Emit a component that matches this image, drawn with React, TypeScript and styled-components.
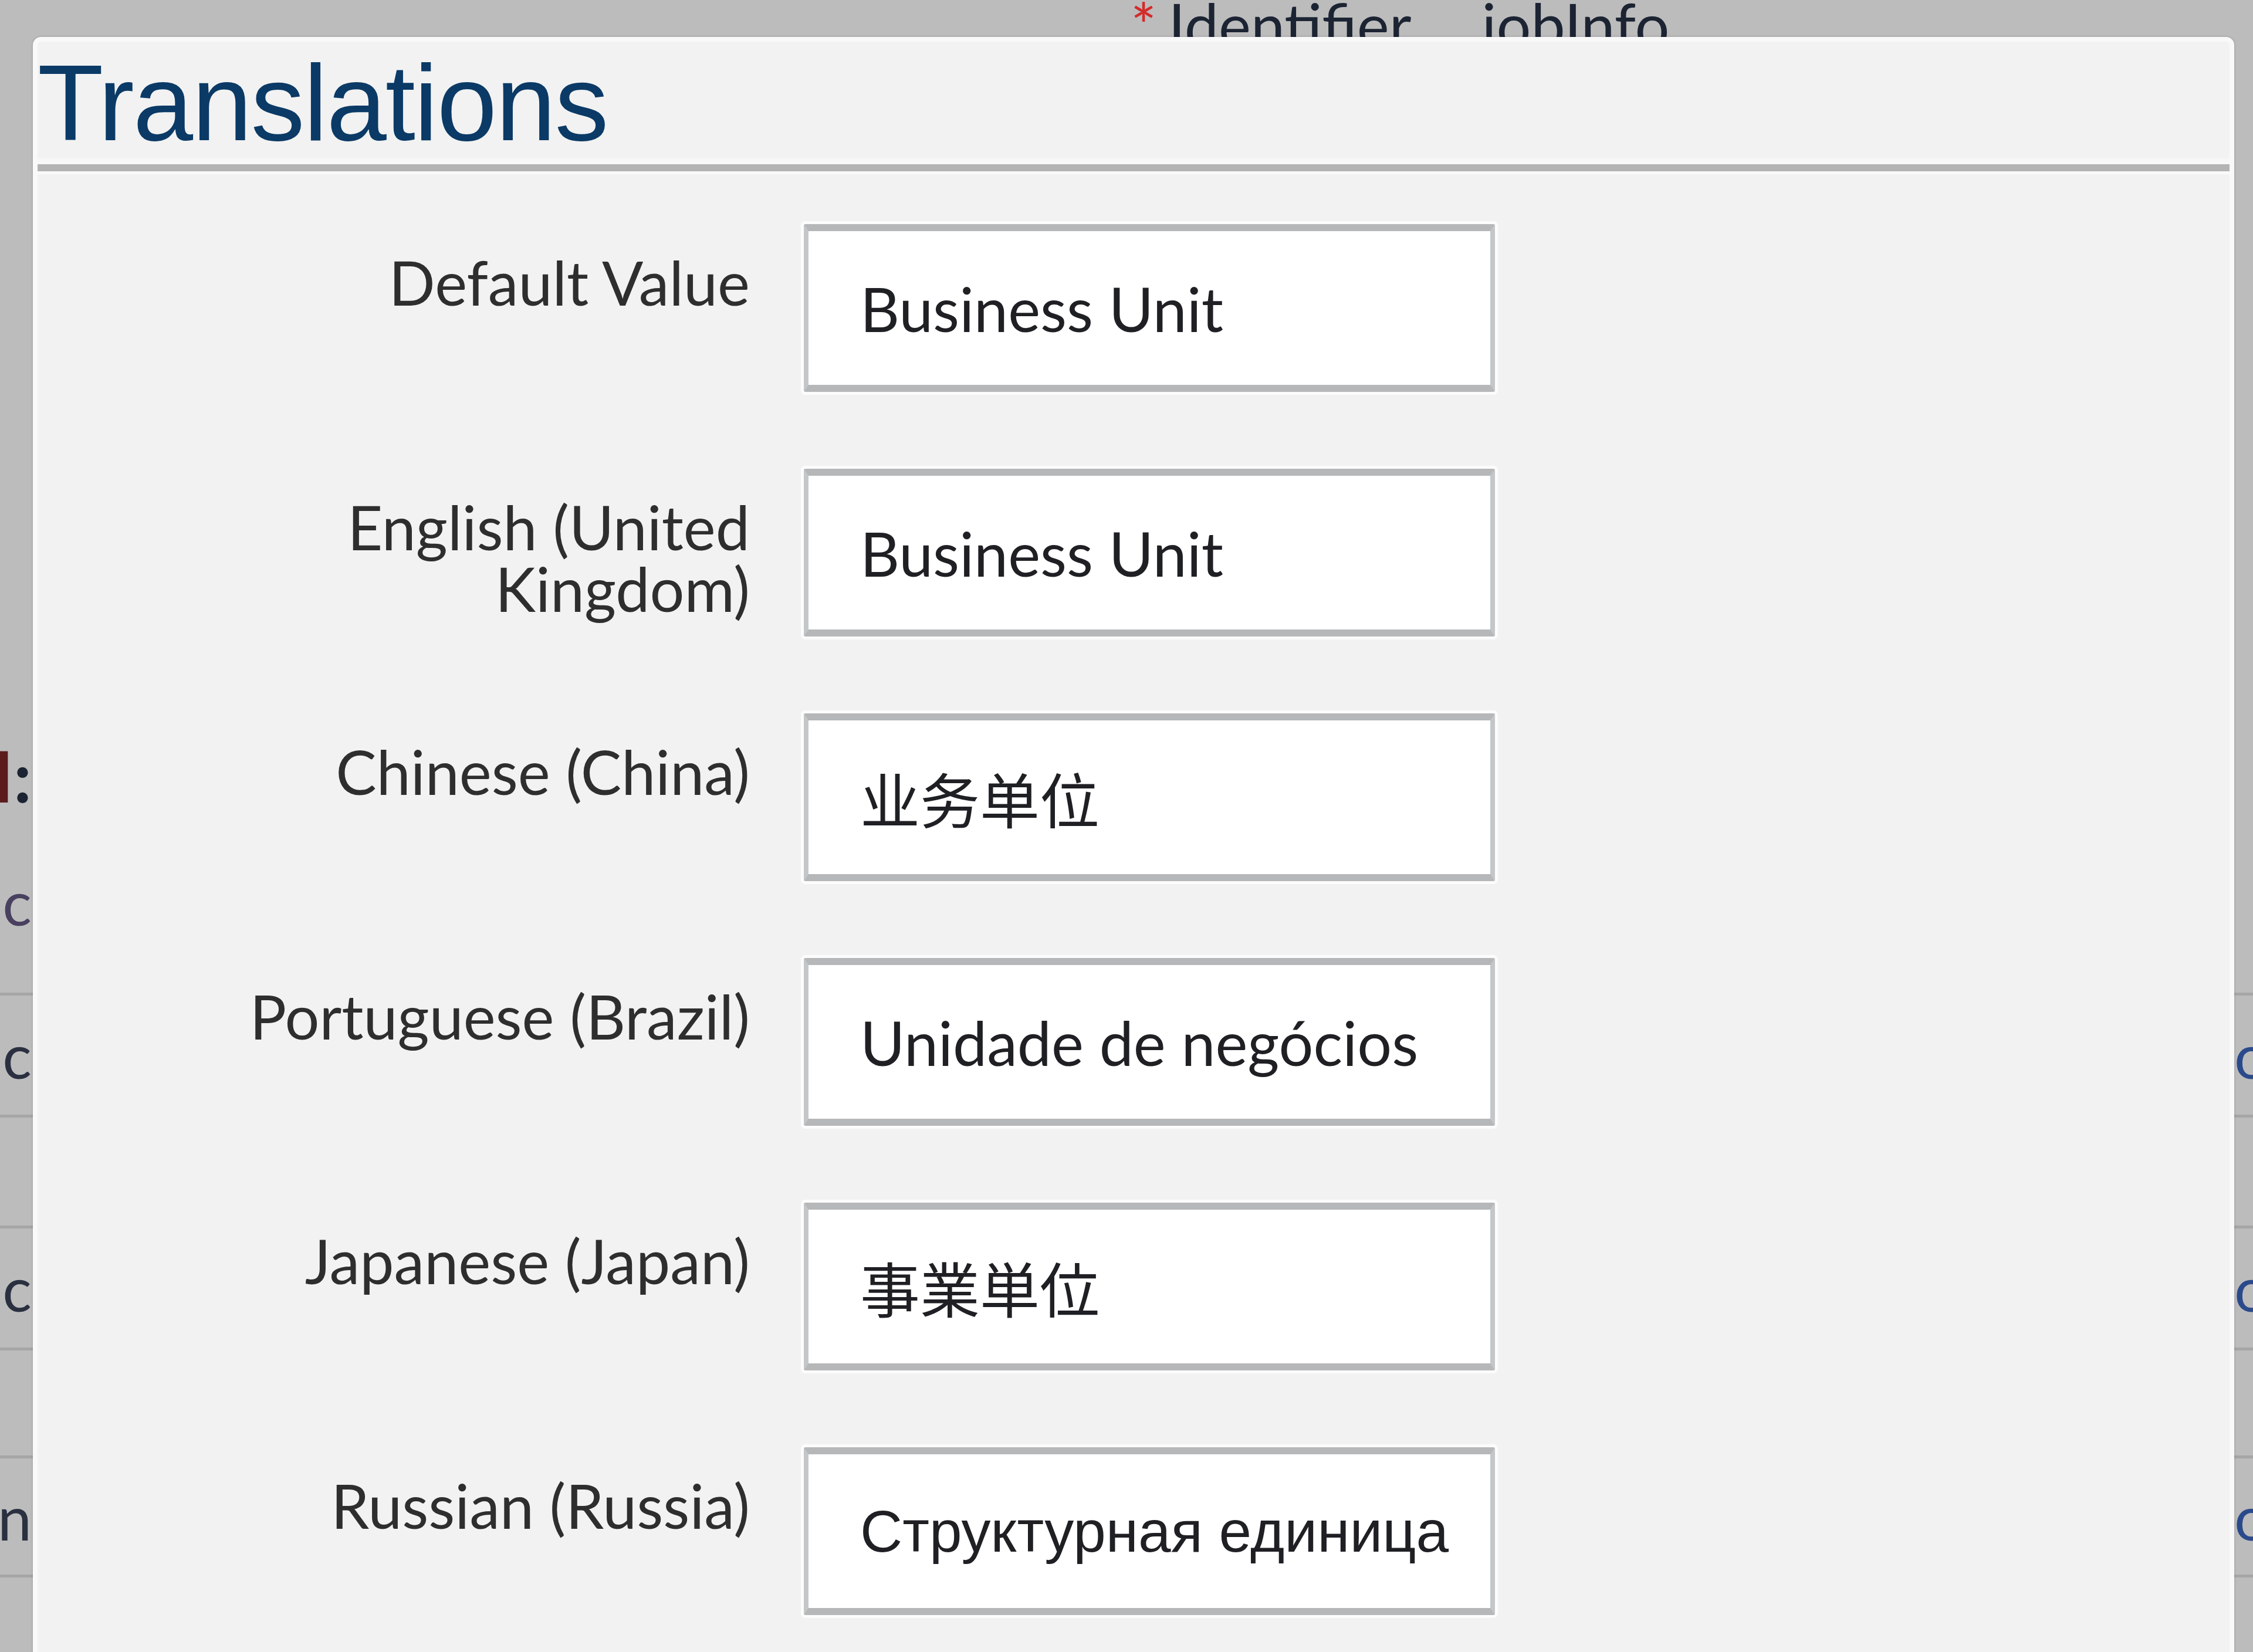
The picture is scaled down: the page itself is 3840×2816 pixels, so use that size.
import React from "react";
import styled, { createGlobalStyle } from "styled-components";

const Global = createGlobalStyle`
  html, body { margin: 0; padding: 0; }
  body { width: 3840px; height: 2816px; overflow: hidden; background: #bcbcbc; }
`;

const SANS = `"Lato", "Liberation Sans", "Noto Sans CJK SC", sans-serif`;

const Page = styled.div`
  position: relative;
  width: 3840px;
  height: 2816px;
  overflow: hidden;
  background: #bcbcbc;
  font-family: ${SANS};
`;

/* ---------- background page (dimmed behind the dialog) ---------- */
const BgColumn = styled.div`
  display: flex;
  flex-direction: column;
`;

const TopField = styled.div`
  height: 1262px;
  display: flex;
  align-items: flex-start;
  gap: 120px;
  padding-left: 1927px;
  font-size: 104px;
  line-height: 84px;
  color: #1c2433;
`;

const Req = styled.span`
  color: #d42a2a;
  margin-right: 20px;
`;

const BgRow = styled.div<{ $h: number; $line?: boolean }>`
  height: ${(p) => p.$h}px;
  display: grid;
  grid-template-columns: 54px 1fr 32px;
  align-items: center;
  border-bottom: ${(p) => (p.$line ? "5px solid #a6a6a6" : "none")};
  box-sizing: border-box;
`;

const BgLeft = styled.div<{ $bold?: boolean; $color?: string; $size?: number }>`
  display: flex;
  justify-content: flex-end;
  overflow: hidden;
  white-space: nowrap;
  font-size: ${(p) => p.$size ?? 104}px;
  font-weight: ${(p) => (p.$bold ? 700 : 400)};
  color: ${(p) => p.$color ?? "#2a3040"};
`;

const Colon = styled.span`
  color: #1c2433;
`;

const BgRight = styled.div`
  grid-column: 3;
  overflow: hidden;
  white-space: nowrap;
  font-size: 104px;
  color: #2b4a8c;
`;

/* ---------- dialog ---------- */
const Dialog = styled.div`
  position: absolute;
  left: 56px;
  top: 63px;
  right: 32px;
  bottom: -120px;
  background: #f2f2f2;
  border: 8px solid #f9f9f9;
  border-radius: 14px 14px 0 0;
  box-shadow: 0 0 4px rgba(0, 0, 0, 0.18);
  display: flex;
  flex-direction: column;
`;

const Header = styled.div`
  height: 209px;
  border-bottom: 12px solid #b3b3b3;
  box-shadow: 0 5px 0 #fafafa, inset 0 -10px 0 #f7f7f7;
`;

const Title = styled.h1`
  margin: 0;
  font-family: "Liberation Sans", Arial, sans-serif;
  font-weight: 400;
  font-size: 184px;
  line-height: 209px;
  letter-spacing: -2px;
  color: #0b3a66;
`;

const Form = styled.div`
  display: grid;
  grid-template-columns: 920px 1178px;
  column-gap: 92px;
  row-gap: 131px;
  padding: 90px 0 0 294px;
`;

const Label = styled.div`
  padding-top: 46px;
  text-align: right;
  font-size: 104px;
  line-height: 105px;
  color: #2e2e2e;
`;

type Script = "latin" | "zh" | "ja" | "ru";

const fieldFont: Record<Script, string> = {
  latin: SANS,
  zh: `"Noto Sans CJK SC", "Liberation Sans", sans-serif`,
  ja: `"Noto Sans CJK JP", "Liberation Sans", sans-serif`,
  ru: `"Liberation Sans", Arial, sans-serif`,
};

const Field = styled.div<{ $script: Script }>`
  box-sizing: border-box;
  height: 286px;
  background: #ffffff;
  border-style: solid;
  border-width: 12px 8px;
  border-color: #b5b7b9 #c4c7ca;
  border-radius: 3px;
  box-shadow: 0 0 0 5px rgba(255, 255, 255, 0.75);
  display: flex;
  align-items: center;
  padding-left: 88px;
  overflow: hidden;
  white-space: nowrap;
  font-size: ${(p) => (p.$script === "ru" ? 100 : p.$script === "latin" ? 104 : 102)}px;
  color: #1f2024;
  font-family: ${(p) => fieldFont[p.$script]};
`;

type Row = { label: string; value: string; script: Script; lang?: string };

const rows: Row[] = [
  { label: "Default Value", value: "Business Unit", script: "latin" },
  { label: "English (United Kingdom)", value: "Business Unit", script: "latin" },
  { label: "Chinese (China)", value: "业务单位", script: "zh", lang: "zh-CN" },
  { label: "Portuguese (Brazil)", value: "Unidade de negócios", script: "latin" },
  { label: "Japanese (Japan)", value: "事業単位", script: "ja", lang: "ja" },
  { label: "Russian (Russia)", value: "Структурная единица", script: "ru", lang: "ru" },
];

export default function App() {
  return (
    <>
      <Global />
      <Page>
        <BgColumn>
          <TopField>
            <span>
              <Req>*</Req>Identifier
            </span>
            <span>jobInfo</span>
          </TopField>
          <BgRow $h={120}>
            <BgLeft $bold $size={120} $color="#5c1c1c">
              <span>
                I<Colon>:</Colon>
              </span>
            </BgLeft>
          </BgRow>
          <BgRow $h={315} $line>
            <BgLeft $color="#4a4060">Ic</BgLeft>
          </BgRow>
          <BgRow $h={208} $line>
            <BgLeft>Doc</BgLeft>
            <BgRight>ok</BgRight>
          </BgRow>
          <BgRow $h={189} $line />
          <BgRow $h={208} $line>
            <BgLeft>Doc</BgLeft>
            <BgRight>ok</BgRight>
          </BgRow>
          <BgRow $h={184} $line />
          <BgRow $h={203} $line>
            <BgLeft>Position</BgLeft>
            <BgRight>ok</BgRight>
          </BgRow>
          <BgRow $h={200} />
        </BgColumn>

        <Dialog>
          <Header>
            <Title>Translations</Title>
          </Header>
          <Form>
            {rows.map((r) => (
              <React.Fragment key={r.label}>
                <Label>{r.label}</Label>
                <Field $script={r.script} lang={r.lang}>
                  {r.value}
                </Field>
              </React.Fragment>
            ))}
          </Form>
        </Dialog>
      </Page>
    </>
  );
}
